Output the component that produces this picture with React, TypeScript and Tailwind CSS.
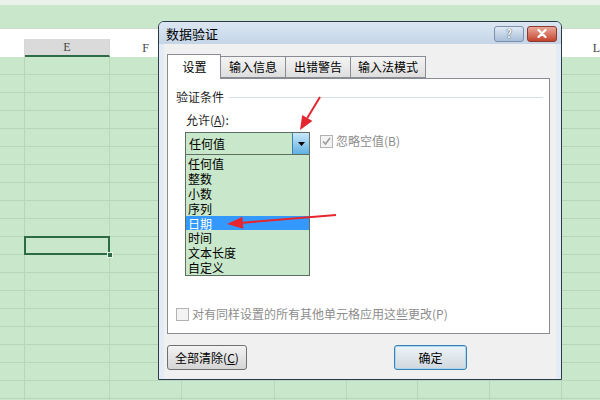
import React from 'react';

const COLS = ['w-[25px]', 'w-[85px]', 'w-[72px]', 'w-[93px]', 'w-[72px]', 'w-[71px]', 'w-[72px]', 'w-[72px]', 'w-[70px]'];
const HEAD = ['', 'E', 'F', 'G', 'H', 'I', 'J', 'K', 'L'];
const ROWS = Array.from({ length: 20 }, (_, i) => i);
const ITEMS = ['任何值', '整数', '小数', '序列', '日期', '时间', '文本长度', '自定义'];

function Sheet() {
  return (
    <div className="flex flex-col">
      <div className="h-[5px] bg-[#e9f2e9]" />
      <div className="h-[23px] bg-[#c9e7cb]" />
      <div className="h-[11px] bg-white border-t border-[#cfd8cf]" />
      <div className="h-[18px] bg-white flex shrink-0">
        {COLS.map((c, i) => (
          <div
            key={i}
            className={`${c} shrink-0 h-full flex items-center justify-center text-[12px] text-[#444] font-['Liberation_Serif',serif] border-r border-[#d6d6d6] ${
              i === 1 ? 'bg-[#dadada] border-b-2 border-b-[#2f6b48]' : ''
            }`}
          >
            {HEAD[i]}
          </div>
        ))}
      </div>
      {ROWS.map((r) => (
        <div key={r} className="flex h-[18px] shrink-0">
          {COLS.map((c, i) => (
            <div key={i} className={`${c} shrink-0 h-full border-r border-b border-[#b9d5bb] bg-[#c9e7cb] relative`}>
              {r === 10 && i === 1 && (
                <>
                  <div className="absolute z-10 -top-px -left-px -right-px -bottom-px border-2 border-[#2d6a46]" />
                  <div className="absolute z-10 -right-[4px] -bottom-[4px] w-[6px] h-[6px] bg-[#2d6a46] border border-[#e8f3e8]" />
                </>
              )}
            </div>
          ))}
        </div>
      ))}
    </div>
  );
}

function Check({ checked }: { checked?: boolean }) {
  return (
    <div className="w-[13px] h-[13px] border border-[#b3b3b3] bg-[#f3f3f3] flex items-center justify-center shrink-0">
      {checked && (
        <svg width="9" height="9" viewBox="0 0 9 9">
          <path d="M1 4.5 L3.5 7 L8 1" fill="none" stroke="#9a9a9a" strokeWidth="1.6" />
        </svg>
      )}
    </div>
  );
}

function Dialog() {
  return (
    <div className="absolute z-20 left-[158px] top-[21px] w-[404px] h-[359px] border border-[#2b3a4a] rounded-t-[6px] bg-[#e3ebf4] flex flex-col overflow-hidden">
      {/* title bar */}
      <div className="h-[22px] shrink-0 flex items-center pl-[7px] pr-[4px] bg-linear-to-b from-[#dbe6f2] to-[#c5d5e7]">
        <span className="text-[13px] text-black leading-none">数据验证</span>
        <div className="ml-auto flex gap-[3px] mt-[1px]">
          <div className="w-[30px] h-[16px] rounded-[3px] border border-[#7d90a8] bg-linear-to-b from-[#e0e9f4] to-[#a9bfd9] flex items-center justify-center text-[11px] font-bold text-white leading-none [text-shadow:0_0_1px_#33465c,0_0_1px_#33465c]">
            ?
          </div>
          <div className="w-[30px] h-[16px] rounded-[3px] border border-[#8b3a2e] bg-linear-to-b from-[#e9a899] to-[#c4432f] flex items-center justify-center">
            <svg width="10" height="9" viewBox="0 0 10 9">
              <path d="M1.5 1 L8.5 8 M8.5 1 L1.5 8" stroke="#ffffff" strokeWidth="2.2" strokeLinecap="round" />
            </svg>
          </div>
        </div>
      </div>

      {/* body */}
      <div className="flex-1 mx-[5px] bg-[#f0f0f0] pl-[3px] pr-[5px] flex flex-col">
        {/* tabs */}
        <div className="flex items-end h-[25px] mt-[9px] text-[12px] text-black">
          <div className="w-[54px] h-[25px] bg-white border border-b-0 border-[#898c95] relative z-10 -mb-px flex items-center justify-center pl-[1px]">
            设置
          </div>
          <div className="w-[66px] h-[22px] -ml-px border border-[#898c95] bg-linear-to-b from-[#f4f4f4] to-[#dedede] flex items-center justify-center">
            输入信息
          </div>
          <div className="w-[66px] h-[22px] -ml-px border border-[#898c95] bg-linear-to-b from-[#f4f4f4] to-[#dedede] flex items-center justify-center">
            出错警告
          </div>
          <div className="w-[76px] h-[22px] -ml-px border border-[#898c95] bg-linear-to-b from-[#f4f4f4] to-[#dedede] flex items-center justify-center">
            输入法模式
          </div>
        </div>

        {/* panel */}
        <div className="h-[256px] w-[383px] bg-white border border-[#898c95] flex flex-col text-[12px]">
          <div className="flex items-center pl-[8px] pr-[6px] mt-[10px] h-[16px]">
            <span className="text-[#1e1e1e]">验证条件</span>
            <div className="flex-1 h-px bg-[#d5dfe5] ml-[5px]" />
          </div>
          <div className="pl-[18px] mt-[7px] h-[16px] flex items-center text-[#1e1e1e]">
            允许(<span className="underline">A</span>):
          </div>
          <div className="flex ml-[17px] mt-[4px]">
            <div className="w-[125px] flex flex-col">
              <div className="h-[23px] border border-[#5e6e60] bg-[#c9e7cb] flex items-center">
                <span className="pl-[3px] text-[12px] text-black flex-1">任何值</span>
                <div className="w-[17px] h-full border-l border-[#3c7fb1] bg-linear-to-b from-[#c9e8f9] to-[#5eb0e2] flex items-center justify-center">
                  <svg width="7" height="4" viewBox="0 0 7 4">
                    <path d="M0 0 H7 L3.5 4 Z" fill="#000" />
                  </svg>
                </div>
              </div>
              <div className="h-[121px] border border-t-0 border-[#5e6e60] bg-[#c9e7cb] flex flex-col pt-[1px]">
                {ITEMS.map((it) => (
                  <div
                    key={it}
                    className={`h-[15px] leading-[15px] text-[12px] pl-[2px] overflow-hidden ${
                      it === '日期' ? 'bg-[#3399ff] text-white' : 'text-black'
                    }`}
                  >
                    {it}
                  </div>
                ))}
              </div>
            </div>
            <div className="flex items-center gap-[3px] ml-[10px] mt-[2px] h-[14px]">
              <Check checked />
              <span className="text-[#8d8d8d]">忽略空值(B)</span>
            </div>
          </div>
          <div className="flex items-center gap-[3px] ml-[8px] mt-[31px] h-[14px]">
            <Check />
            <span className="text-[#8d8d8d]">对有同样设置的所有其他单元格应用这些更改(P)</span>
          </div>
        </div>

        {/* buttons */}
        <div className="flex mt-[11px] text-[12px] text-black">
          <div className="w-[80px] h-[25px] rounded-[3px] border border-[#707070] bg-linear-to-b from-[#f3f3f3] to-[#d4d4d4] flex items-center justify-center">
            全部清除(<span className="underline">C</span>)
          </div>
          <div className="w-[73px] h-[25px] ml-[147px] rounded-[3px] border border-[#3c7fb1] bg-linear-to-b from-[#eef4f8] to-[#cfd8df] flex items-center justify-center shadow-[inset_0_0_0_1px_#a8d8f0]">
            确定
          </div>
        </div>
      </div>
    </div>
  );
}

function Arrows() {
  return (
    <svg className="absolute z-30 inset-0 pointer-events-none" width="600" height="400" viewBox="0 0 600 400">
      <line x1="320" y1="97" x2="307.3" y2="118" stroke="#e5262e" strokeWidth="2" />
      <polygon points="300,130 312.4,121.1 302.2,114.9" fill="#e5262e" />
      <line x1="336" y1="215" x2="243" y2="222.7" stroke="#e5262e" strokeWidth="2" />
      <polygon points="227,224 243.4,228.7 242.4,216.7" fill="#e5262e" />
    </svg>
  );
}

export default function App() {
  return (
    <div className="w-[600px] h-[400px] relative overflow-hidden bg-[#c9e7cb] font-['Noto_Sans_CJK_SC','Noto_Sans',sans-serif]">
      <Sheet />
      <Dialog />
      <Arrows />
    </div>
  );
}
